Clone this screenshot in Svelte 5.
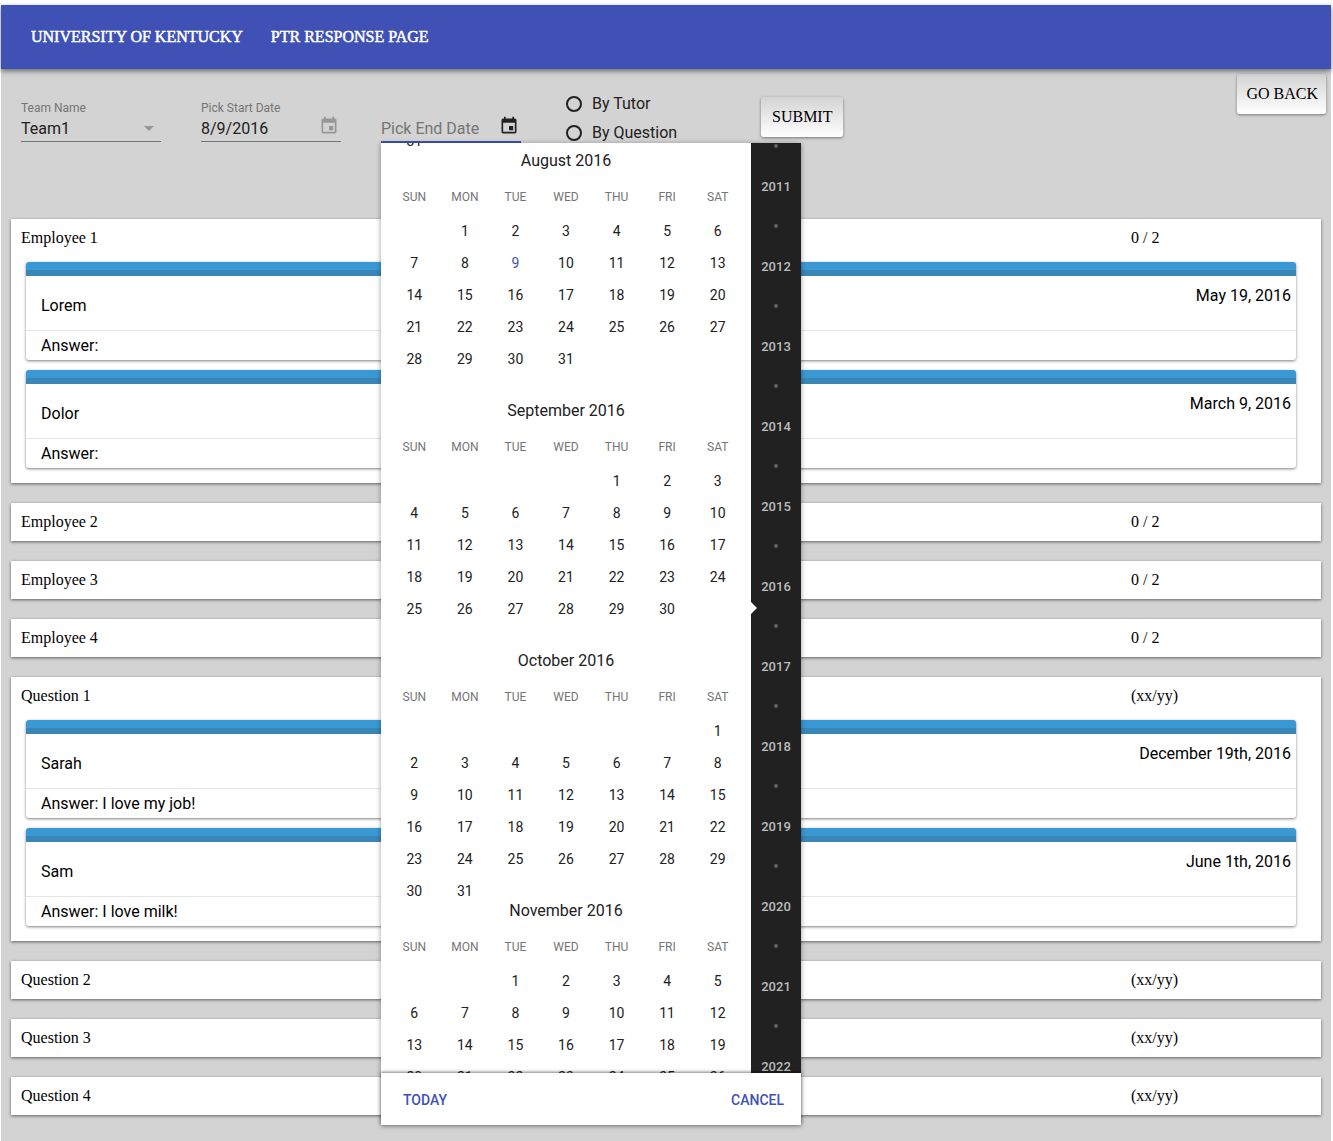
<script>
  import { onMount } from 'svelte';

  const weekdays = ['Sun', 'Mon', 'Tue', 'Wed', 'Thu', 'Fri', 'Sat'];
  const months = [
    { name: 'July 2016', first: 5, days: 31 },
    { name: 'August 2016', first: 1, days: 31, today: 9 },
    { name: 'September 2016', first: 4, days: 30 },
    { name: 'October 2016', first: 6, days: 31 },
    { name: 'November 2016', first: 2, days: 30 }
  ];
  const years = Array.from({ length: 12 }, (_, i) => 2011 + i);

  function weeksOf(month) {
    const cells = [];
    for (let i = 0; i < 42; i++) {
      const day = i - month.first + 1;
      cells.push(day > 0 && day <= month.days ? day : null);
    }
    return Array.from({ length: 6 }, (_, w) => cells.slice(w * 7, w * 7 + 7));
  }

  const sections = [
    {
      title: 'Employee 1',
      count: '0 / 2',
      items: [
        { name: 'Lorem', date: 'May 19, 2016', answer: 'Answer:' },
        { name: 'Dolor', date: 'March 9, 2016', answer: 'Answer:' }
      ]
    },
    { title: 'Employee 2', count: '0 / 2', items: [] },
    { title: 'Employee 3', count: '0 / 2', items: [] },
    { title: 'Employee 4', count: '0 / 2', items: [] },
    {
      title: 'Question 1',
      count: '(xx/yy)',
      items: [
        { name: 'Sarah', date: 'December 19th, 2016', answer: 'Answer: I love my job!' },
        { name: 'Sam', date: 'June 1th, 2016', answer: 'Answer: I love milk!' }
      ]
    },
    { title: 'Question 2', count: '(xx/yy)', items: [] },
    { title: 'Question 3', count: '(xx/yy)', items: [] },
    { title: 'Question 4', count: '(xx/yy)', items: [] }
  ];

  let monthList;
  let yearList;

  onMount(() => {
    monthList.scrollTop = 252;
    yearList.scrollTop = 17;
  });
</script>

{#snippet calendarIcon()}
  <svg class="icon" viewBox="0 0 24 24" aria-hidden="true">
    <path d="M17 12h-5v5h5v-5zM16 1v2H8V1H6v2H5c-1.11 0-1.99.9-1.99 2L3 19c0 1.1.89 2 2 2h14c1.1 0 2-.9 2-2V5c0-1.1-.9-2-2-2h-1V1h-2zm3 18H5V8h14v11z" />
  </svg>
{/snippet}

<div class="page">
  <header class="toolbar">
    <span>UNIVERSITY OF KENTUCKY</span>
    <span>PTR RESPONSE PAGE</span>
  </header>

  <form class="filters" onsubmit={(e) => e.preventDefault()}>
    <div class="field">
      <label for="team">Team Name</label>
      <div class="control">
        <select id="team">
          <option>Team1</option>
          <option>Team2</option>
        </select>
        <svg class="arrow" viewBox="0 0 10 5" aria-hidden="true"><path d="M0 0h10L5 5z" /></svg>
      </div>
    </div>

    <div class="field">
      <label for="start">Pick Start Date</label>
      <div class="control">
        <input id="start" type="text" value="8/9/2016" />
        <button type="button" class="pick" aria-label="Open start date calendar">{@render calendarIcon()}</button>
      </div>
    </div>

    <div class="field active">
      <div class="label-space"></div>
      <div class="control">
        <input type="text" placeholder="Pick End Date" aria-label="Pick End Date" />
        <button type="button" class="pick" aria-label="Open end date calendar">{@render calendarIcon()}</button>
      </div>

      <div class="popup">
        <div class="picker">
          <div class="months" bind:this={monthList}>
            {#each months as month}
              <table class="month">
                <caption>{month.name}</caption>
                <thead>
                  <tr>
                    {#each weekdays as day}<th scope="col">{day}</th>{/each}
                  </tr>
                </thead>
                <tbody>
                  {#each weeksOf(month) as week}
                    <tr>
                      {#each week as day}
                        <td class:today={day && day === month.today}>{day ?? ''}</td>
                      {/each}
                    </tr>
                  {/each}
                </tbody>
              </table>
            {/each}
          </div>
          <div class="years">
            <ul bind:this={yearList}>
              {#each years as year}
                <li><i class="dot"></i><span>{year}</span></li>
              {/each}
            </ul>
            <i class="pointer"></i>
          </div>
        </div>
        <div class="actions">
          <button type="button">TODAY</button>
          <button type="button">CANCEL</button>
        </div>
      </div>
    </div>

    <div class="radios">
      <label><input type="radio" name="grouping" value="tutor" />By Tutor</label>
      <label><input type="radio" name="grouping" value="question" />By Question</label>
    </div>

    <button type="submit" class="raised submit">SUBMIT</button>
    <button type="button" class="raised back">GO BACK</button>
  </form>

  <main>
    {#each sections as section}
      <section class="card">
        <div class="heading">
          <span>{section.title}</span>
          <span class="count">{section.count}</span>
        </div>
        {#if section.items.length}
          <div class="items">
            {#each section.items as item}
              <article class="item">
                <div class="summary">
                  <span class="name">{item.name}</span>
                  <span>{item.date}</span>
                </div>
                <div class="answer">{item.answer}</div>
              </article>
            {/each}
          </div>
        {/if}
      </section>
    {/each}
  </main>
</div>

<style>
  :global(body) {
    background: #fff;
  }

  .page {
    box-sizing: border-box;
    min-height: calc(100vh - 5px);
    margin: 5px 2px 0 1px;
    padding-bottom: 26px;
    background: #d3d3d3;
    color: #000;
    font: 16px/20px 'Liberation Serif', 'Times New Roman', serif;
  }

  button,
  input,
  select {
    margin: 0;
    padding: 0;
    border: 0;
    background: none;
    color: inherit;
    font: inherit;
    outline: none;
  }

  button {
    cursor: pointer;
  }

  .toolbar {
    position: relative;
    display: flex;
    align-items: center;
    gap: 28px;
    height: 64px;
    padding: 0 30px;
    background: #3f51b5;
    color: #fff;
    -webkit-text-stroke: 0.5px #fff;
    box-shadow: 0 2px 5px rgba(0, 0, 0, 0.5);
  }

  .filters {
    display: flex;
    align-items: flex-start;
    height: 150px;
    padding: 0 5px 0 20px;
    color: #212121;
    font-family: Roboto, sans-serif;
  }

  .field {
    position: relative;
    flex: none;
    width: 140px;
    margin: 29px 40px 0 0;
  }

  .field > label,
  .label-space {
    display: block;
    height: 18px;
    color: #757575;
    font-size: 12px;
    line-height: 20px;
  }

  .control {
    display: flex;
    align-items: flex-start;
    height: 25px;
    margin-bottom: 1px;
    border-bottom: 1px solid #757575;
  }

  .active .control {
    margin-bottom: 0;
    border-bottom: 2px solid #3f51b5;
  }

  .control input,
  .control select {
    flex: 1;
    width: 0;
    min-width: 0;
    height: 25px;
    appearance: none;
  }

  .control input::placeholder {
    color: #757575;
    opacity: 1;
  }

  .arrow {
    align-self: center;
    width: 10px;
    margin-right: 7px;
    fill: #979797;
  }

  .pick {
    flex: none;
    width: 20px;
    height: 20px;
    margin-right: 2px;
    color: #979797;
  }

  .active .pick {
    color: #212121;
  }

  .icon {
    display: block;
    width: 20px;
    height: 20px;
    fill: currentColor;
  }

  .radios {
    display: flex;
    flex-direction: column;
    gap: 9px;
    width: 195px;
    margin: 25px 0 0 5px;
  }

  .radios label {
    display: flex;
    align-items: center;
    gap: 10px;
  }

  .radios input {
    width: 16px;
    height: 16px;
    border: 2px solid #212121;
    border-radius: 50%;
    appearance: none;
  }

  .raised {
    height: 40px;
    border-radius: 3px;
    background: linear-gradient(#d3d3d3, #fff);
    box-shadow: 0 1px 3px rgba(0, 0, 0, 0.45);
    color: #000;
    font-family: 'Liberation Serif', 'Times New Roman', serif;
  }

  .submit {
    margin-top: 28px;
    padding: 0 11px;
  }

  .back {
    margin: 5px 0 0 auto;
    padding: 0 8px 0 9px;
  }

  .popup {
    position: absolute;
    top: 100%;
    left: 0;
    z-index: 2;
    width: 420px;
    background: #fff;
    box-shadow: 0 1px 5px rgba(0, 0, 0, 0.4);
  }

  .picker {
    display: flex;
    height: 930px;
  }

  .months {
    flex: 1;
    overflow: hidden;
    padding: 0 8px;
  }

  .month {
    display: block;
    height: 250px;
    text-align: center;
  }

  .month caption {
    display: block;
    padding-top: 2px;
    line-height: 36px;
  }

  .month thead,
  .month tbody {
    display: block;
  }

  .month tr {
    display: grid;
    grid-template-columns: repeat(7, 1fr);
  }

  .month th {
    padding: 0;
    color: #757575;
    font-size: 12px;
    font-weight: 400;
    line-height: 36px;
    text-transform: uppercase;
  }

  .month td {
    height: 32px;
    padding: 0;
    font-size: 14px;
    line-height: 32px;
  }

  .month .today {
    color: #3f51b5;
  }

  .years {
    position: relative;
    width: 50px;
    background: #212121;
    color: #bcbcbc;
    font-size: 13px;
    font-weight: 500;
  }

  .years ul {
    height: 100%;
    margin: 0;
    padding: 0;
    overflow: hidden;
    list-style: none;
  }

  .years li {
    display: grid;
    grid-template-rows: 40px 40px;
    place-items: center;
  }

  .years span {
    padding-top: 2px;
  }

  .dot {
    width: 4px;
    height: 4px;
    border-radius: 50%;
    background: #616161;
  }

  .pointer {
    position: absolute;
    top: 50%;
    left: 0;
    width: 6px;
    height: 12px;
    margin-top: -6px;
    background: #fff;
    clip-path: polygon(0 0, 100% 50%, 0 100%);
  }

  .actions {
    position: relative;
    display: flex;
    justify-content: space-between;
    box-sizing: border-box;
    height: 52px;
    padding: 2px 17px 0 22px;
    background: #fff;
    box-shadow: 0 -1px 3px rgba(0, 0, 0, 0.5);
    color: #3f51b5;
    font-size: 14px;
    font-weight: 500;
  }

  .card {
    margin: 0 10px 20px;
    background: #fff;
    box-shadow: 0 1px 3px rgba(0, 0, 0, 0.55);
  }

  .card:last-child {
    margin-bottom: 0;
  }

  .heading {
    display: flex;
    align-items: center;
    justify-content: space-between;
    height: 38px;
    padding: 0 10px;
  }

  .count {
    width: 180px;
  }

  .items {
    display: grid;
    gap: 10px;
    padding: 5px 25px 15px 15px;
    font-family: Roboto, sans-serif;
  }

  .item {
    border-radius: 3px;
    background: #fff;
    box-shadow: 0 1px 3px rgba(0, 0, 0, 0.5);
  }

  .item::before {
    content: '';
    display: block;
    height: 8px;
    border-bottom: 6px solid #3a87b7;
    border-radius: 3px 3px 0 0;
    background: #3a99d5;
  }

  .summary {
    display: flex;
    justify-content: space-between;
    padding: 10px 5px 14px 15px;
    border-bottom: 1px solid #e5e5e5;
  }

  .name {
    padding-top: 10px;
  }

  .answer {
    padding: 5px 15px 4px;
  }
</style>
